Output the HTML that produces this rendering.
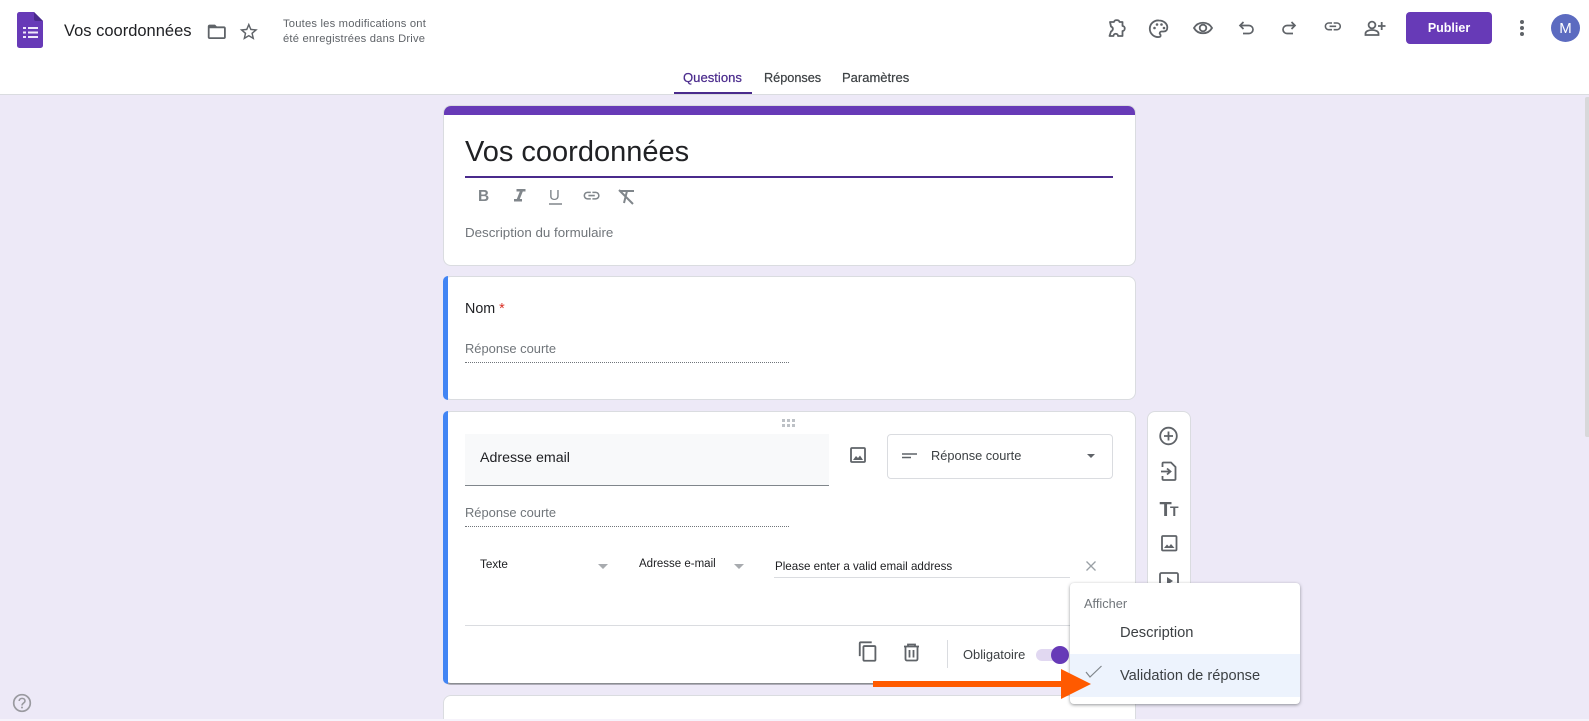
<!DOCTYPE html>
<html lang="fr"><head><meta charset="utf-8"><title>Vos coordonnées</title>
<style>
html,body{margin:0;padding:0;width:1589px;height:721px;overflow:hidden;background:#ede9f7;font-family:"Liberation Sans",Arial,sans-serif}
div{position:absolute;box-sizing:border-box}
#page{left:0;top:0;width:1589px;height:721px;overflow:hidden;background:#ede9f7}
.t{white-space:nowrap;line-height:20px;height:20px}
.card{background:#fff;border:1px solid #dadce0;border-radius:8px;left:443px;width:693px}
.blue{left:443px;width:5px;background:#4285f4;border-radius:8px 0 0 8px}
.g{color:#70757a;font-size:13px}
.d{color:#202124}
svg{position:absolute;left:0;top:0}
</style></head><body><div id="page">

<div style="left:0;top:0;width:1589px;height:94px;background:#fff"></div>
<div style="left:0;top:94px;width:1589px;height:1px;background:#dadce0"></div>
<div style="left:1585px;top:97px;width:4px;height:340px;background:#d8d8da;border-radius:2px 0 0 2px"></div>

<!-- cards -->
<div class="card" style="top:105px;height:161px;overflow:hidden"><div style="left:-1px;top:-1px;width:693px;height:10px;background:#673ab7"></div></div>
<div class="card" style="top:276px;height:124px"></div><div class="blue" style="top:276px;height:124px"></div>
<div class="card" style="top:411px;height:273px;border-bottom-color:#8a8d91;box-shadow:0 1px 0 rgba(60,64,67,.35)"></div><div class="blue" style="top:411px;height:273px"></div>
<div class="card" style="top:695px;height:40px"></div>
<div style="left:1147px;top:411px;width:44px;height:200px;background:#fff;border:1px solid #dadce0;border-radius:8px"></div>
<div style="left:0;top:719px;width:1589px;height:2px;background:#f6f3fb"></div>

<!-- header text -->
<div class="t d" style="left:64px;top:21px;font-size:16.5px">Vos coordonnées</div>
<div class="t" style="left:283px;top:14px;font-size:11.2px;color:#5f6368;letter-spacing:.2px">Toutes les modifications ont</div>
<div class="t" style="left:283px;top:29px;font-size:11.2px;color:#5f6368;letter-spacing:.2px">été enregistrées dans Drive</div>
<div class="t" style="left:683px;top:68px;font-size:13.1px;color:#4a2a8c;-webkit-text-stroke:.2px #4a2a8c">Questions</div>
<div class="t" style="left:764px;top:68px;font-size:12.7px;color:#3c4043;-webkit-text-stroke:.2px #3c4043">Réponses</div>
<div class="t" style="left:842px;top:68px;font-size:13px;color:#3c4043;-webkit-text-stroke:.2px #3c4043">Paramètres</div>
<div style="left:674px;top:92px;width:78px;height:2px;background:#4a2a8c"></div>
<div style="left:1406px;top:12px;width:86px;height:32px;background:#673ab7;border-radius:4px"></div>
<div class="t" style="left:1406px;top:18px;width:86px;text-align:center;font-size:12.5px;font-weight:bold;color:#fff">Publier</div>
<div style="left:1551px;top:14px;width:29px;height:28px;border-radius:50%;background:#5c6bc0"></div>
<div class="t" style="left:1551px;top:19px;width:29px;text-align:center;font-size:15px;color:#fff">M</div>

<!-- card 1 -->
<div class="t d" style="left:465px;top:135px;height:34px;line-height:34px;font-size:29px">Vos coordonnées</div>
<div style="left:465px;top:176px;width:648px;height:2px;background:#4a2a8c"></div>
<div class="t g" style="left:465px;top:223px;font-size:13.35px">Description du formulaire</div>

<!-- card 2 -->
<div class="t d" style="left:465px;top:299px;font-size:14.3px">Nom <span style="color:#d93025">*</span></div>
<div class="t g" style="left:465px;top:339px;font-size:12.9px">Réponse courte</div>
<div style="left:465px;top:362px;width:324px;height:0;border-top:1px dotted #70757a"></div>

<!-- card 3 -->
<div style="left:465px;top:434px;width:364px;height:52px;background:#f8f9fa;border-bottom:1px solid #80868b"></div>
<div class="t d" style="left:480px;top:448px;font-size:14.2px">Adresse email</div>
<div style="left:887px;top:434px;width:226px;height:45px;border:1px solid #dadce0;border-radius:4px"></div>
<div class="t" style="left:931px;top:446px;font-size:12.8px;color:#3c4043">Réponse courte</div>
<div class="t g" style="left:465px;top:503px;font-size:12.9px">Réponse courte</div>
<div style="left:465px;top:526px;width:324px;height:0;border-top:1px dotted #70757a"></div>
<div class="t d" style="left:480px;top:555px;font-size:11.7px">Texte</div>
<div class="t d" style="left:639px;top:554px;font-size:11.5px">Adresse e-mail</div>
<div class="t d" style="left:775px;top:557px;font-size:11.6px">Please enter a valid email address</div>
<div style="left:774px;top:577px;width:296px;height:1px;background:#dadce0"></div>
<div style="left:465px;top:625px;width:648px;height:1px;background:#dadce0"></div>
<div style="left:947px;top:640px;width:1px;height:28px;background:#dadce0"></div>
<div class="t" style="left:963px;top:645px;font-size:12.9px;color:#3c4043">Obligatoire</div>
<div style="left:1036px;top:649px;width:28px;height:12px;border-radius:6px;background:#e1d8f1"></div>
<div style="left:1051px;top:646px;width:18px;height:18px;border-radius:50%;background:#673ab7"></div>

<!-- icons under menu -->
<svg width="1589" height="721" viewBox="0 0 1589 721" fill="none" stroke="#5f6368" stroke-width="2">
  <!-- logo -->
  <path d="M19.500 12H34L43 21V45.500A2.500 2.500 0 0 1 40.500 48H19.500A2.500 2.500 0 0 1 17 45.500V14.500A2.500 2.500 0 0 1 19.500 12Z" fill="#673ab7" stroke="none"/>
  <path d="M34 12L43 21H36A2 2 0 0 1 34 19Z" fill="#4a2a8c" stroke="none"/>
  <g fill="#efe8fa" stroke="none"><rect x="23" y="27" width="3" height="2"/><rect x="28" y="27" width="10" height="2"/><rect x="23" y="31.500" width="3" height="2"/><rect x="28" y="31.500" width="10" height="2"/><rect x="23" y="36" width="3" height="2"/><rect x="28" y="36" width="10" height="2"/></g>
  <!-- folder -->
  <path transform="translate(206 21) scale(.9)" fill="#5f6368" stroke="none" d="M20 6h-8l-2-2H4c-1.100 0-1.990.9-1.990 2L2 18c0 1.100.9 2 2 2h16c1.100 0 2-.9 2-2V8c0-1.100-.9-2-2-2zm0 12H4V8h16v10z"/>
  <!-- star -->
  <path transform="translate(238 21) scale(.9)" fill="#5f6368" stroke="none" d="M22 9.240l-7.190-.62L12 2 9.190 8.630 2 9.240l5.460 4.730L5.820 21 12 17.270 18.180 21l-1.630-7.030L22 9.240zM12 15.400l-3.760 2.270 1-4.280-3.320-2.880 4.380-.38L12 6.100l1.710 4.040 4.380.38-3.320 2.880 1 4.280L12 15.400z"/>
  <!-- puzzle -->
  <path d="M1110 22H1114C1114.500 19.500 1119 19.500 1119.500 22H1122.500V26C1125.500 26 1125.500 31 1122.500 31V36H1118C1118 33 1113.500 33 1113.500 36H1109.500L1111 31.500C1113.500 30 1113.500 27.500 1111 26.500Z" stroke-width="1.800" stroke-linejoin="round"/>
  <!-- palette -->
  <path d="M1159 20.500A8.300 8.300 0 1 0 1159 37C1161 37 1161 35 1160 34C1159.300 33 1160 31.500 1161.500 31.500H1163.500C1166 31.500 1167.300 30 1167.300 27.500C1167.300 23.500 1163.500 20.500 1159 20.500Z" stroke-width="1.800"/>
  <g fill="#5f6368" stroke="none"><circle cx="1154.500" cy="28" r="1.300"/><circle cx="1157" cy="24.500" r="1.300"/><circle cx="1161.500" cy="24.500" r="1.300"/><circle cx="1164" cy="28" r="1.300"/></g>
  <!-- eye -->
  <path d="M1194 28C1198 21 1208 21 1212 28C1208 35 1198 35 1194 28Z" stroke-width="1.800"/><circle cx="1203" cy="28" r="3.300" stroke-width="1.800"/>
  <!-- undo -->
  <path d="M1243.500 22L1240 25.500L1243.500 29M1240 25.500H1249A4 4 0 0 1 1249 33.500H1243" stroke-width="1.700"/>
  <!-- redo -->
  <path d="M1291.500 22L1295 25.500L1291.500 29M1295 25.500H1287A4 4 0 0 0 1287 33.500H1293" stroke-width="1.700"/>
  <!-- link -->
  <path transform="translate(1323 16.500) scale(.82)" fill="#5f6368" stroke="none" d="M3.900 12c0-1.710 1.390-3.100 3.100-3.100h4V7H7c-2.760 0-5 2.240-5 5s2.240 5 5 5h4v-1.900H7c-1.710 0-3.100-1.390-3.100-3.100zM8 13h8v-2H8v2zm9-6h-4v1.900h4c1.710 0 3.100 1.390 3.100 3.100s-1.390 3.100-3.100 3.100h-4V17h4c2.760 0 5-2.240 5-5s-2.240-5-5-5z"/>
  <!-- add person -->
  <circle cx="1372" cy="25" r="3.400" stroke-width="1.800"/><path d="M1365.500 35V33.500C1365.500 31 1369.500 30 1372 30C1374.500 30 1378.500 31 1378.500 33.500V35Z" stroke-width="1.800"/><path d="M1381.700 22V30M1378 26H1385.500" stroke-width="1.800"/>
  <!-- kebab -->
  <g fill="#5f6368" stroke="none"><circle cx="1522" cy="22" r="2"/><circle cx="1522" cy="28" r="2"/><circle cx="1522" cy="34" r="2"/></g>
  <!-- format -->
  <text x="478" y="201" font-family="Liberation Sans" font-size="15.500" font-weight="bold" fill="#80868b" stroke="none">B</text>
  <path d="M516.500 189H525.500V191.500H522.800L519.800 199H522V201.500H514V199H516.800L519.800 191.500H516.500Z" fill="#80868b" stroke="none"/>
  <text x="549" y="200" font-family="Liberation Sans" font-size="15" fill="#80868b" stroke="none">U</text>
  <path d="M549 204H562" stroke="#80868b" stroke-width="1.500"/>
  <path transform="translate(582 186) scale(.8)" fill="#80868b" stroke="none" d="M3.900 12c0-1.710 1.390-3.100 3.100-3.100h4V7H7c-2.760 0-5 2.240-5 5s2.240 5 5 5h4v-1.900H7c-1.710 0-3.100-1.390-3.100-3.100zM8 13h8v-2H8v2zm9-6h-4v1.900h4c1.710 0 3.100 1.390 3.100 3.100s-1.390 3.100-3.100 3.100h-4V17h4c2.760 0 5-2.240 5-5s-2.240-5-5-5z"/>
  <path d="M620 191H634M627 191L624 203M619 190L633 204" stroke="#80868b" stroke-width="2"/>
  <!-- drag -->
  <g fill="#bdc1c6" stroke="none"><rect x="782" y="419" width="3" height="3"/><rect x="787" y="419" width="3" height="3"/><rect x="792" y="419" width="3" height="3"/><rect x="782" y="424" width="3" height="3"/><rect x="787" y="424" width="3" height="3"/><rect x="792" y="424" width="3" height="3"/></g>
  <!-- image in question -->
  <rect x="851" y="448" width="14" height="14" rx="1" stroke-width="1.800"/><path d="M853 460L856 456L858 458L860 455.500L863 460Z" fill="#5f6368" stroke="none"/>
  <!-- short text + caret -->
  <path d="M902 454H917M902 457.500H911" stroke-width="1.500"/>
  <path d="M1087 454H1095L1091 458Z" fill="#5f6368" stroke="none"/>
  <path d="M598 564H608L603 569Z M734 564H744L739 569Z" fill="#a8abaf" stroke="none"/>
  <path d="M1086.500 561.500L1095.500 570.500M1095.500 561.500L1086.500 570.500" stroke="#9aa0a6" stroke-width="1.300"/>
  <!-- copy -->
  <path transform="translate(857 640.500) scale(.92)" fill="#5f6368" stroke="none" d="M16 1H4c-1.100 0-2 .9-2 2v14h2V3h12V1zm3 4H8c-1.100 0-2 .9-2 2v14c0 1.100.9 2 2 2h11c1.100 0 2-.9 2-2V7c0-1.100-.9-2-2-2zm0 16H8V7h11v14z"/>
  <!-- trash -->
  <path d="M904 646.500H919M908 646.500V644.500H915V646.500M905.500 646.500V659A1.500 1.500 0 0 0 907 660.500H916A1.500 1.500 0 0 0 917.500 659V646.500M909.500 650V657.500M913.500 650V657.500" stroke-width="1.800"/>
  <!-- toolbar -->
  <circle cx="1168.500" cy="436" r="8.300" stroke-width="1.800"/><path d="M1168.500 431.500V440.500M1164 436H1173" stroke-width="1.800"/>
  <path d="M1162.500 467V463.500A1 1 0 0 1 1163.500 462.500H1171L1175.500 467V479A1 1 0 0 1 1174.500 480H1163.500A1 1 0 0 1 1162.500 479V476M1161 471.500H1170M1167 468.500L1170.500 471.500L1167 474.500" stroke-width="1.800"/>
  <text x="1159.500" y="516" font-family="Liberation Sans" font-size="20" font-weight="bold" fill="#5f6368" stroke="none">T</text>
  <text x="1170" y="516" font-family="Liberation Sans" font-size="14" font-weight="bold" fill="#5f6368" stroke="none">T</text>
  <rect x="1162" y="536" width="14.500" height="14.500" rx="1" stroke-width="1.800"/><path d="M1164 548L1167 544.500L1169 546.500L1171 544L1174.500 548Z" fill="#5f6368" stroke="none"/>
  <rect x="1160" y="573" width="18" height="16" rx="1.500" stroke-width="1.800"/><path d="M1167 577L1173 581L1167 585Z" fill="#5f6368" stroke="none"/>
  <!-- help -->
  <circle cx="22" cy="703" r="8.300" stroke="#9a9aa0" stroke-width="1.700"/>
  <path d="M19.200 701C19.200 697.500 25 697.500 25 701C25 703 22 703 22 705.500" stroke="#9a9aa0" stroke-width="1.600"/><circle cx="22" cy="707.500" r="1" fill="#9a9aa0" stroke="none"/>
</svg>

<!-- menu -->
<div style="left:1070px;top:583px;width:230px;height:121px;background:#fff;border-radius:4px;box-shadow:0 1px 3px rgba(60,64,67,.55);overflow:hidden">
  <div style="left:0;top:71px;width:230px;height:43px;background:#edf3fd"></div>
  <div class="t" style="left:14px;top:11px;font-size:12.8px;color:#70757a">Afficher</div>
  <div class="t" style="left:50px;top:40px;font-size:14.7px;color:#3c4043">Description</div>
  <div class="t" style="left:50px;top:83px;font-size:14.6px;color:#3c4043">Validation de réponse</div>
</div>
<svg width="1589" height="721" viewBox="0 0 1589 721" fill="none">
  <path d="M1086 671.500L1090 676.500L1101.500 665.500" stroke="#80868b" stroke-width="1.200" transform="translate(0 .5)"/>
  <path d="M873 681H1061V669L1091 684L1061 699V687H873Z" fill="#ff5a00"/>
</svg>
</div></body></html>
